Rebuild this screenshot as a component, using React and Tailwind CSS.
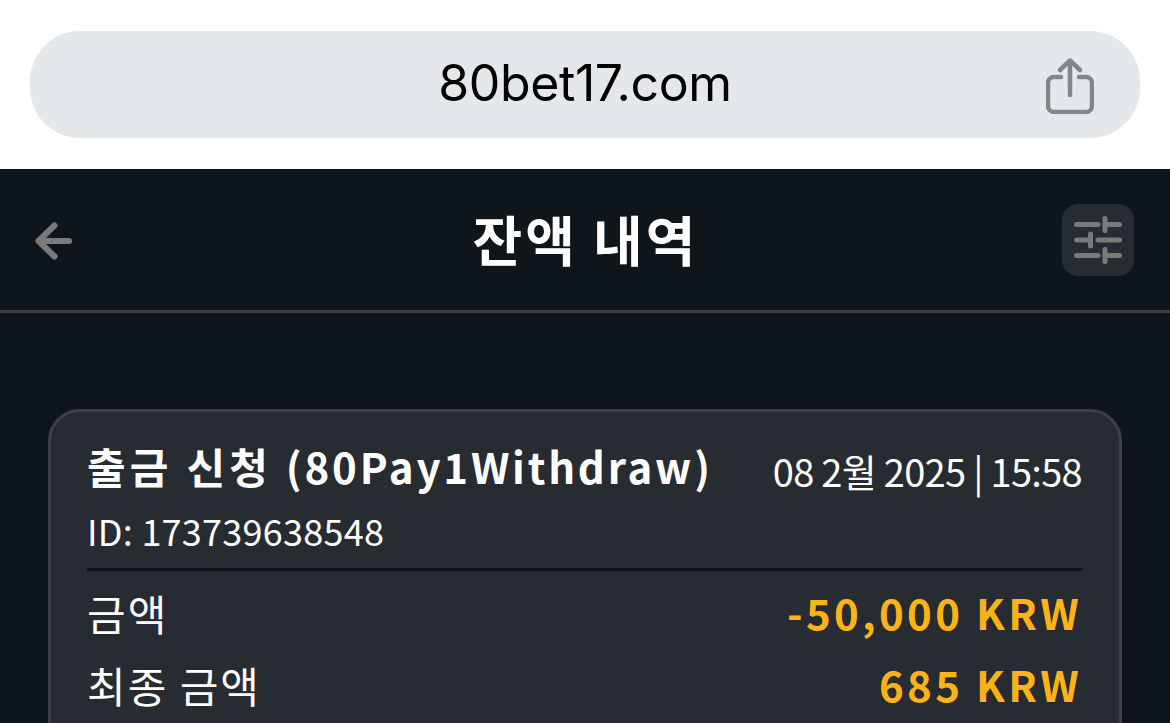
const cjk = "font-['Noto_Sans_CJK_KR','Noto_Sans',sans-serif]";

function Share() {
  return (
    <svg width="48" height="56" viewBox="0 0 48 56" fill="none" stroke="#80868b" strokeWidth="4.500" strokeLinecap="round" strokeLinejoin="round">
      <path d="M24 37V3" />
      <path d="M14 12L24 2.500L34 12" />
      <path d="M15 19H8a6 6 0 0 0-6 6v23a6 6 0 0 0 6 6h32a6 6 0 0 0 6-6V25a6 6 0 0 0-6-6h-7" />
    </svg>
  );
}

function Sliders() {
  return (
    <svg width="48" height="48" viewBox="0 0 48 48" fill="none" stroke="#7a7a7a" strokeWidth="5" strokeLinecap="round">
      <path d="M2.500 8.500H24M31 8.500H45.500M31 2.500V14.500" />
      <path d="M2.500 24H16.500M24 24H45.500M16.500 18V30" />
      <path d="M2.500 39.500H24M31 39.500H45.500M31 33.500V45.500" />
    </svg>
  );
}

function Back() {
  return (
    <svg width="38" height="38" viewBox="0 0 38 38" fill="none" stroke="#7a7a7a" strokeWidth="6" strokeLinecap="round" strokeLinejoin="round">
      <path d="M34 19H4" />
      <path d="M19.500 3.500L3.500 19L19.500 34.500" />
    </svg>
  );
}

function Row({ label, value }) {
  return (
    <div className="flex items-center justify-between h-[72px]">
      <span className="text-[42px] text-white tracking-[2px] -mt-[2px]">{label}</span>
      <span className="text-[42px] font-semibold text-[#fcb316] tracking-[3.3px] -mt-[4px] mr-[1px]">{value}</span>
    </div>
  );
}

export default function App() {
  return (
    <div className={`w-[1170px] h-[723px] overflow-hidden bg-[#0e161c] ${cjk}`}>
      <div className="h-[169px] bg-white pt-[31px] px-[30px]">
        <div className="h-[107px] rounded-[50px] bg-[#e5e8eb] relative flex items-center justify-center">
          <span className="font-['Inter',sans-serif] text-[50px] tracking-[-0.4px] text-black -mt-[2px]">80bet17.com</span>
          <div className="absolute right-[46px] top-[27px]"><Share /></div>
        </div>
      </div>
      <div className="h-[144px] border-b-[3px] border-[#3f3f3f] flex items-center justify-between pl-[35px] pr-[36px]">
        <div className="w-[72px] mt-[2px]"><Back /></div>
        <span className="text-[54px] font-bold text-white leading-none tracking-[3px] -mt-[2px] ml-[2px]">잔액 내역</span>
        <div className="w-[72px] h-[72px] rounded-[16px] bg-[#272b32] flex items-center justify-center"><Sliders /></div>
      </div>
      <div className="px-[48px] pt-[96px]">
        <div className="rounded-[32px] border-[3px] border-[#3f4044] bg-[#272b32] px-[36px] pt-[23px] pb-[40px]">
          <div className="flex items-center justify-between h-[60px]">
            <span className="text-[42px] font-semibold text-white tracking-[2.8px]"><span className="tracking-[4.200px]">출금 신청 </span>(80Pay1Withdraw)</span>
            <span className="text-[38px] text-white tracking-[-0.7px] mt-[10px] mr-[1px]">08 2월 2025 | 15:58</span>
          </div>
          <div className="h-[60px] flex items-center text-[36px] text-white tracking-[0.25px] mt-[5px]">ID: 173739638548</div>
          <div className="h-[3px] bg-[#0e161c] mt-[8px]" />
          <div className="pt-[6px]">
            <Row label="금액" value="-50,000 KRW" />
            <Row label="최종 금액" value="685 KRW" />
          </div>
        </div>
      </div>
    </div>
  );
}
